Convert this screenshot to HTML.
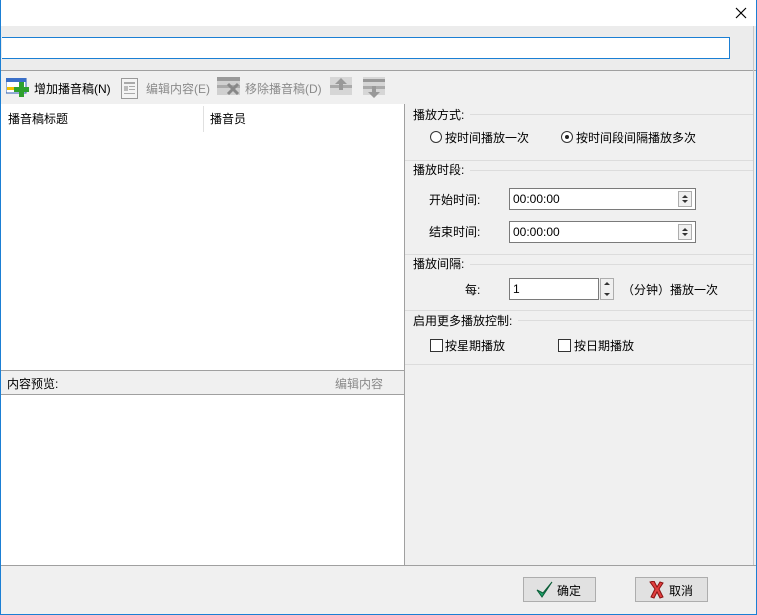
<!DOCTYPE html>
<html><head><meta charset="utf-8"><style>
*{margin:0;padding:0;box-sizing:border-box}
body{width:757px;height:615px;position:relative;background:#f0f0f0;font:12px "Liberation Sans","Noto Sans CJK SC",sans-serif;color:#000;overflow:hidden}
.a{position:absolute}
.t{position:absolute;white-space:nowrap;line-height:14px}
.g{color:#8a8a8a}
.spin{position:absolute;width:14px;border:1px solid #adadad;background:#f0f0f0}
.spin:after{content:"";position:absolute;left:3px;top:3px;border:3px solid transparent;border-bottom:3px solid #333;border-top:0}
.spin:before{content:"";position:absolute;left:3px;bottom:3px;border:3px solid transparent;border-top:3px solid #333;border-bottom:0}
.inp{position:absolute;background:#fff;border:1px solid #7a7a7a;padding-left:3px;line-height:21px}
.sep{position:absolute;left:405px;width:348px;height:1px;background:#dcdcdc}
.btn{position:absolute;width:73px;height:25px;border:1px solid #adadad;background:#e1e1e1}
</style></head><body>
<div class="a" style="left:0;top:0;width:757px;height:26px;background:#fff"></div>
<div class="a" style="left:0;top:0;width:1px;height:615px;background:#1b7fd4"></div>
<div class="a" style="left:756px;top:0;width:1px;height:615px;background:#1b7fd4"></div>
<div class="a" style="left:0;top:614px;width:757px;height:1px;background:#1b7fd4"></div>
<svg class="a" style="left:735px;top:7px" width="12" height="12"><path d="M1 1L11 11M11 1L1 11" stroke="#000" stroke-width="1.2"/></svg>
<div class="a" style="left:1px;top:26px;width:755px;height:44px;background:#ececec"></div>
<div class="a" style="left:2px;top:37px;width:728px;height:22px;background:#fff;border:1px solid #1b7fd4;border-left:0"></div>
<div class="a" style="left:1px;top:70px;width:755px;height:1px;background:#a0a0a0"></div>
<div class="a" style="left:753px;top:26px;width:1px;height:540px;background:#c8c8c8"></div>
<svg class="a" style="left:6px;top:78px" width="24" height="20"><rect x="0" y="0" width="20" height="15" fill="#fff" stroke="#2a5db0"/><rect x="0" y="0" width="20" height="4" fill="#3a6fc8"/><rect x="1" y="9" width="8" height="3" fill="#f0c000"/><rect x="13" y="4" width="5" height="15" fill="#2ea02e"/><rect x="8" y="9" width="15" height="5" fill="#2ea02e"/></svg>
<div class="t" style="left:34px;top:82px">增加播音稿(N)</div>
<svg class="a" style="left:121px;top:78px" width="18" height="21"><rect x="0.5" y="0.5" width="16" height="20" fill="#f4f4f4" stroke="#999"/><rect x="3" y="4" width="11" height="2" fill="#aaa"/><rect x="3" y="8" width="4" height="5" fill="#bbb"/><rect x="8" y="8" width="6" height="1" fill="#aaa"/><rect x="8" y="11" width="6" height="1" fill="#aaa"/><rect x="3" y="15" width="11" height="1" fill="#aaa"/></svg>
<div class="t g" style="left:146px;top:82px">编辑内容(E)</div>
<svg class="a" style="left:217px;top:77px" width="24" height="20"><rect x="0" y="0" width="23" height="18" fill="#d0d0d0"/><rect x="0" y="0" width="23" height="4" fill="#9a9a9a"/><rect x="0" y="8" width="23" height="3" fill="#aaa"/><path d="M11 7l10 10M21 7L11 17" stroke="#888" stroke-width="3"/></svg>
<div class="t g" style="left:245px;top:82px">移除播音稿(D)</div>
<svg class="a" style="left:330px;top:77px" width="22" height="20"><rect x="0" y="0" width="22" height="18" fill="#d6d6d6"/><rect x="0" y="8" width="22" height="3" fill="#aaa"/><path d="M11 1l6 6h-4v6h-4v-6h-4z" fill="#999"/></svg>
<svg class="a" style="left:363px;top:77px" width="22" height="22"><rect x="0" y="0" width="22" height="18" fill="#d6d6d6"/><rect x="0" y="2" width="22" height="3" fill="#999"/><rect x="0" y="9" width="22" height="3" fill="#aaa"/><path d="M11 21l6-6h-4v-6h-4v6h-4z" fill="#999"/></svg>
<div class="a" style="left:1px;top:104px;width:403px;height:461px;background:#fff"></div>
<div class="a" style="left:203px;top:106px;width:1px;height:26px;background:#e0e0e0"></div>
<div class="t" style="left:8px;top:112px">播音稿标题</div>
<div class="t" style="left:210px;top:112px">播音员</div>
<div class="a" style="left:1px;top:370px;width:403px;height:25px;background:#f0f0f0;border-top:1px solid #a0a0a0;border-bottom:1px solid #a0a0a0"></div>
<div class="t" style="left:7px;top:377px">内容预览:</div>
<div class="t g" style="left:335px;top:377px">编辑内容</div>
<div class="a" style="left:404px;top:104px;width:1px;height:462px;background:#a0a0a0"></div>
<div class="t" style="left:413px;top:108px">播放方式:</div>
<div class="sep" style="top:114px;left:470px;width:283px"></div>
<div class="a" style="left:430px;top:131px;width:12px;height:12px;border:1px solid #333;border-radius:50%;background:#fff"></div>
<div class="t" style="left:445px;top:131px">按时间播放一次</div>
<div class="a" style="left:561px;top:131px;width:12px;height:12px;border:1px solid #333;border-radius:50%;background:#fff"><div class="a" style="left:3px;top:3px;width:4px;height:4px;border-radius:50%;background:#222"></div></div>
<div class="t" style="left:576px;top:131px">按时间段间隔播放多次</div>
<div class="sep" style="top:160px"></div>
<div class="t" style="left:413px;top:163px">播放时段:</div>
<div class="sep" style="top:170px;left:470px;width:283px"></div>
<div class="t" style="left:429px;top:193px">开始时间:</div>
<div class="inp" style="left:509px;top:188px;width:187px;height:22px">00:00:00</div>
<div class="spin" style="left:678px;top:191px;height:16px"></div>
<div class="t" style="left:429px;top:225px">结束时间:</div>
<div class="inp" style="left:509px;top:221px;width:187px;height:22px">00:00:00</div>
<div class="spin" style="left:678px;top:224px;height:16px"></div>
<div class="sep" style="top:254px"></div>
<div class="t" style="left:413px;top:257px">播放间隔:</div>
<div class="sep" style="top:264px;left:470px;width:283px"></div>
<div class="t" style="left:465px;top:283px">每:</div>
<div class="inp" style="left:509px;top:278px;width:90px;height:22px">1</div>
<div class="spin" style="left:600px;top:278px;height:22px"></div>
<div class="t" style="left:622px;top:283px">（分钟）播放一次</div>
<div class="sep" style="top:310px"></div>
<div class="t" style="left:413px;top:314px">启用更多播放控制:</div>
<div class="sep" style="top:320px;left:518px;width:235px"></div>
<div class="a" style="left:430px;top:339px;width:13px;height:13px;border:1px solid #333;background:#fff"></div>
<div class="t" style="left:445px;top:339px">按星期播放</div>
<div class="a" style="left:558px;top:339px;width:13px;height:13px;border:1px solid #333;background:#fff"></div>
<div class="t" style="left:574px;top:339px">按日期播放</div>
<div class="sep" style="top:364px"></div>
<div class="a" style="left:1px;top:565px;width:755px;height:1px;background:#a0a0a0"></div>
<div class="btn" style="left:523px;top:577px"></div>
<svg class="a" style="left:536px;top:581px" width="18" height="18"><path d="M1 9l5 7L16 1l-9 11z" fill="#1fa36a" stroke="#0b5e38" stroke-width="1"/></svg>
<div class="t" style="left:557px;top:584px">确定</div>
<div class="btn" style="left:635px;top:577px"></div>
<svg class="a" style="left:648px;top:581px" width="16" height="18"><path d="M2 1l5 7-4 8 3 1 3-6 3 6 3-1-4-8 4-6-3-1-3 5-3-6z" fill="#e04040" stroke="#8a1010" stroke-width="1"/></svg>
<div class="t" style="left:669px;top:584px">取消</div>
</body></html>
